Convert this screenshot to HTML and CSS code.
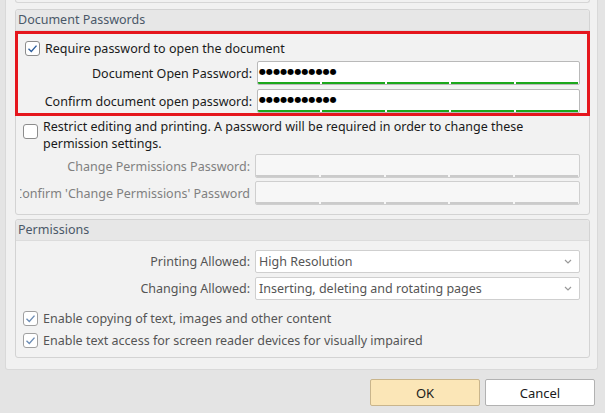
FILE: index.html
```html
<!DOCTYPE html>
<html lang="en">
<head>
  <meta charset="UTF-8">
  <title>Document Security</title>
  <link rel="stylesheet" href="styles.css">
</head>
<body>
  <div class="panel">
    <div class="prev-group"></div>

    <div class="group">
      <div class="group-title">Document Passwords</div>
      <div class="highlight">
        <label class="check-row">
          <span class="box checked">
            <svg viewBox="0 0 15 15" width="15" height="15"><polyline points="3.5,7.8 6.3,10.4 11.5,4.6" /></svg>
          </span>
          <span>Require password to open the document</span>
        </label>
        <div class="field-row">
          <span class="label"><span>Document Open Password:</span></span>
          <div class="field">
            <span class="dots">●●●●●●●●●●●</span>
            <div class="meter"><i></i><i></i><i></i><i></i><i></i></div>
          </div>
        </div>
        <div class="field-row">
          <span class="label"><span>Confirm document open password:</span></span>
          <div class="field">
            <span class="dots">●●●●●●●●●●●</span>
            <div class="meter"><i></i><i></i><i></i><i></i><i></i></div>
          </div>
        </div>
      </div>

      <div class="group-body">
        <label class="check-row restrict">
          <span class="box"></span>
          <span>Restrict editing and printing. A password will be required in order to change these<br>permission settings.</span>
        </label>
        <div class="field-row">
          <span class="label muted"><span>Change Permissions Password:</span></span>
          <div class="field disabled">
            <span class="dots"></span>
            <div class="meter"><i></i><i></i><i></i><i></i><i></i></div>
          </div>
        </div>
        <div class="field-row gap-small">
          <span class="label muted wide"><span>Confirm 'Change Permissions' Password</span></span>
          <div class="field disabled">
            <span class="dots"></span>
            <div class="meter"><i></i><i></i><i></i><i></i><i></i></div>
          </div>
        </div>
      </div>
    </div>

    <div class="group perms">
      <div class="group-title">Permissions</div>
      <div class="group-body">
        <div class="field-row">
          <span class="label soft"><span>Printing Allowed:</span></span>
          <div class="select">
            <span>High Resolution</span>
            <svg viewBox="0 0 8 5" width="8" height="5"><polyline points="1,1 4,4 7,1" /></svg>
          </div>
        </div>
        <div class="field-row">
          <span class="label soft"><span>Changing Allowed:</span></span>
          <div class="select">
            <span>Inserting, deleting and rotating pages</span>
            <svg viewBox="0 0 8 5" width="8" height="5"><polyline points="1,1 4,4 7,1" /></svg>
          </div>
        </div>
        <label class="check-row soft first">
          <span class="box checked dim">
            <svg viewBox="0 0 15 15" width="15" height="15"><polyline points="3.5,7.8 6.3,10.4 11.5,4.6" /></svg>
          </span>
          <span>Enable copying of text, images and other content</span>
        </label>
        <label class="check-row soft">
          <span class="box checked dim">
            <svg viewBox="0 0 15 15" width="15" height="15"><polyline points="3.5,7.8 6.3,10.4 11.5,4.6" /></svg>
          </span>
          <span>Enable text access for screen reader devices for visually impaired</span>
        </label>
      </div>
    </div>
  </div>

  <div class="buttons">
    <button class="btn ok">OK</button>
    <button class="btn">Cancel</button>
  </div>
</body>
</html>
```

FILE: styles.css
```css
html {
  background: #e4e4e4;
}

body {
  margin: 0;
  font-family: 'Noto Sans', sans-serif;
  font-size: 12.5px;
  color: #1a1a1a;
}

.panel {
  margin-left: 5px;
  width: 593px;
  padding: 0 7px 11px 9px;
  box-sizing: border-box;
  background: #f1f1f1;
  border: 1px solid #d9d9d9;
  border-top: 0;
  border-radius: 0 0 3px 3px;
}

.prev-group {
  height: 2px;
  border: 1px solid #d6d6d6;
  border-top: 0;
  border-radius: 0 0 3px 3px;
}

.group {
  margin-top: 6px;
  border: 1px solid #d3d3d3;
  border-radius: 3px;
  background: #f2f2f2;
}

.group-title {
  height: 20px;
  line-height: 20px;
  padding-left: 2px;
  background: #e7e7e7;
  border-bottom: 1px solid #dcdcdc;
  border-radius: 3px 3px 0 0;
  color: #4a5868;
}

.highlight {
  margin: 0 -1px;
  padding: 6px 7px 0 7px;
  border: 3px solid #e5161d;
}

.check-row {
  display: flex;
  align-items: center;
  height: 16px;
  gap: 5px;
}

.box {
  width: 13px;
  height: 13px;
  flex: none;
  border: 1px solid #8c8c8c;
  border-radius: 3px;
  background: #fff;
  display: flex;
}

.box svg {
  margin: -1px;
}

.box polyline {
  fill: none;
  stroke: #2b5d9c;
  stroke-width: 1.4;
}

.box.dim {
  border-color: #a0a0a0;
}

.box.dim polyline {
  stroke: #6d8db5;
}

.field-row {
  display: flex;
  align-items: center;
  margin-top: 5px;
  height: 24px;
}

.highlight .field-row + .field-row {
  margin-top: 4px;
}

.label {
  width: 227px;
  flex: none;
  display: flex;
  justify-content: flex-end;
  white-space: nowrap;
  overflow: hidden;
  margin-right: 5px;
}

.label.wide {
  width: 230px;
  margin-left: -3px;
}

.label span {
  flex: none;
}

.label.muted {
  color: #808080;
}

.field {
  width: 325px;
  height: 24px;
  box-sizing: border-box;
  border: 1px solid #b9b9b9;
  border-radius: 2px;
  background: #fff;
  display: flex;
  flex-direction: column;
  overflow: hidden;
}

.dots {
  flex: 1;
  min-height: 0;
  padding-left: 1px;
  font-family: 'DejaVu Sans', sans-serif;
  font-size: 8px;
  letter-spacing: 0.1px;
  line-height: 20px;
  color: #000;
}

.meter {
  flex: none;
  display: flex;
  gap: 2px;
  height: 2px;
  margin: 0 1px 0 0;
}

.meter i {
  flex: 1;
  background: #1ca81c;
}

.field.disabled {
  background: #f7f7f7;
  border-color: #cfcfcf;
}

.field.disabled .meter i {
  background: #cbcbcb;
}

.group-body {
  padding: 0 8px 9px 7px;
}

.restrict {
  align-items: flex-start;
  height: auto;
  margin-top: 2px;
  line-height: 17px;
}

.restrict .box {
  margin-top: 6px;
}

.group-body .field-row {
  margin-top: 2px;
}

.group-body .field-row.gap-small {
  margin-top: 3px;
}

.perms {
  margin-top: 4px;
}

.perms .group-body {
  padding-top: 9px;
  padding-bottom: 9px;
}

.perms .field-row {
  height: 23px;
  margin-top: 4px;
}

.perms .field-row:first-child {
  margin-top: 0;
}

.soft {
  color: #555;
}

.select {
  width: 325px;
  height: 23px;
  box-sizing: border-box;
  border: 1px solid #cfcfcf;
  border-radius: 2px;
  background: #fff;
  display: flex;
  align-items: center;
  justify-content: space-between;
  padding: 0 7px 0 3px;
  color: #555;
}

.select polyline {
  fill: none;
  stroke: #999;
  stroke-width: 1.2;
}

.check-row.first {
  margin-top: 10px;
}

.check-row.soft + .check-row.soft {
  margin-top: 6px;
}

.buttons {
  display: flex;
  justify-content: flex-end;
  gap: 5px;
  padding: 9px 10px 0 0;
}

.btn {
  width: 110px;
  height: 27px;
  font-family: 'Noto Sans', sans-serif;
  font-size: 13px;
  color: #1a1a1a;
  background: #fff;
  border: 1px solid #b2b2b2;
  border-radius: 2px;
}

.btn.ok {
  background: #fbe6b7;
  border-color: #c9b58c;
}
```
